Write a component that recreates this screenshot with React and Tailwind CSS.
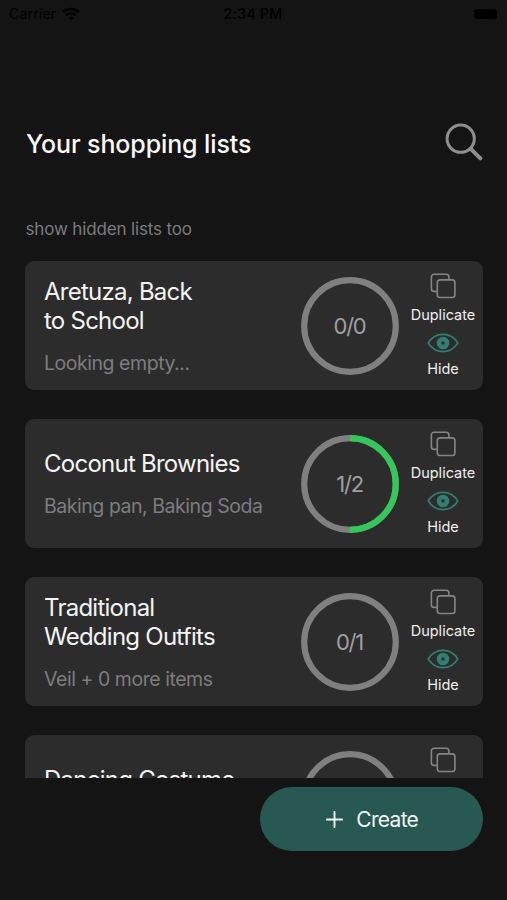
const lists = [
  { title: ["Aretuza, Back", "to School"], note: "Looking empty...", done: 0, total: 0 },
  { title: ["Coconut Brownies"], note: "Baking pan, Baking Soda", done: 1, total: 2 },
  { title: ["Traditional", "Wedding Outfits"], note: "Veil + 0 more items", done: 0, total: 1 },
  { title: ["Dancing Costume"], done: 0, total: 2 },
];

function WifiIcon() {
  return (
    <svg className="ml-[6px] h-[14px] w-[18px]" viewBox="0 0 18 14" fill="none" stroke="#000" strokeWidth="2.4">
      <path d="M1 5.2a11.5 11.5 0 0 1 16 0" />
      <path d="M4 8.4a7.2 7.2 0 0 1 10 0" />
      <path d="M9 13.6 6.2 10.8a4 4 0 0 1 5.6 0Z" fill="#000" stroke="none" />
    </svg>
  );
}

function SearchIcon() {
  return (
    <svg className="mb-[5px] h-[38px] w-[38px]" viewBox="0 0 38 38" fill="none" stroke="#8e8e91">
      <circle cx="15.7" cy="15.7" r="13.6" strokeWidth="3" />
      <path d="M25.8 25.8 35.3 35.3" strokeWidth="4" strokeLinecap="round" />
    </svg>
  );
}

function DuplicateIcon() {
  return (
    <svg className="h-[26px] w-[26px]" viewBox="0 0 26 26" fill="none" stroke="#858585" strokeWidth="1.6">
      <path d="M6.800 18.4H4.100a2.7 2.7 0 0 1-2.7-2.7V3.9A2.7 2.7 0 0 1 4.100 1.200h12.100a2.7 2.7 0 0 1 2.7 2.7v2.5" />
      <rect x="7.3" y="6.9" width="17.6" height="17.6" rx="2.7" />
    </svg>
  );
}

function EyeIcon() {
  return (
    <svg className="h-[20px] w-[32px]" viewBox="0 0 32 20" fill="none" stroke="#327e70" strokeWidth="1.6">
      <path d="M1.2 10C4.5 4.6 9.8 1.4 16 1.4S27.5 4.6 30.8 10C27.5 15.4 22.2 18.6 16 18.6S4.5 15.4 1.2 10Z" />
      <circle cx="16" cy="10" r="4" strokeWidth="4.6" />
    </svg>
  );
}

function Progress({ done, total }) {
  const length = 2 * Math.PI * 45.8;
  const share = total ? done / total : 0;
  return (
    <div className="grid h-[98px] w-[98px] shrink-0 place-items-center">
      <svg className="col-start-1 row-start-1 h-[98px] w-[98px] -rotate-90" viewBox="0 0 98 98" fill="none" strokeWidth="6.2">
        <circle cx="49" cy="49" r="45.8" stroke="#808080" />
        {share > 0 && (
          <circle cx="49" cy="49" r="45.8" stroke="#34c759" strokeDasharray={`${length * share} ${length}`} />
        )}
      </svg>
      <span className="col-start-1 row-start-1 text-[22px] leading-none tracking-[-1.2px] text-[#a0a0a0]">
        {done}/{total}
      </span>
    </div>
  );
}

function ListCard({ title, note, done, total }) {
  return (
    <article className="flex h-[128.5px] shrink-0 items-center rounded-[9px] bg-[#2c2c2c] pl-[19px]">
      <div className="min-w-0 flex-1 whitespace-nowrap">
        <h2 className="text-[24px] leading-[29.5px] tracking-[-0.75px] text-[#f5f5f5]">
          {title.map((line) => (
            <span key={line} className="block">{line}</span>
          ))}
        </h2>
        {note ? (
          <p className="mt-[15px] h-[24px] text-[19.5px] leading-[24px] tracking-[-0.46px] text-[#7d7d7f]">{note}</p>
        ) : (
          <div className="h-[39px]" />
        )}
      </div>
      <Progress done={done} total={total} />
      <div className="ml-[5px] flex h-full w-[79px] shrink-0 flex-col items-center pt-[11.5px] text-[14.5px] leading-[20px] text-[#f0f0f0]">
        <DuplicateIcon />
        <span className="mt-[6.5px]">Duplicate</span>
        <span className="mt-[8px]"><EyeIcon /></span>
        <span className="mt-[6px]">Hide</span>
      </div>
    </article>
  );
}

export default function App() {
  return (
    <div className="flex h-[900px] w-[507px] flex-col overflow-hidden bg-[#141414] font-['Inter','Liberation_Sans',sans-serif]">
      <header className="grid h-[27px] shrink-0 grid-cols-3 items-center pr-[10px] pl-[9px] text-[14px] text-black">
        <div className="flex items-center">
          <span className="tracking-[0.2px]">Carrier</span>
          <WifiIcon />
        </div>
        <span className="text-center font-semibold tracking-[0.3px]">2:34 PM</span>
        <span className="h-[10px] w-[23px] justify-self-end rounded-[3px] bg-black" />
      </header>
      <div className="mt-[95px] flex h-[44px] shrink-0 items-center justify-between pr-[24px] pl-[26px]">
        <h1 className="mt-[2px] text-[25px] font-medium tracking-[-0.12px] text-[#fafafa]">Your shopping lists</h1>
        <SearchIcon />
      </div>
      <p className="mt-[51px] shrink-0 pl-[25.5px] text-[17px] leading-[24px] tracking-[-0.15px] text-[#7c7c7e]">show hidden lists too</p>
      <main className="mt-[20.4px] flex h-[516.3px] shrink-0 flex-col gap-[29.5px] overflow-hidden pr-[24.5px] pl-[25px]">
        {lists.map((list) => (
          <ListCard key={list.title[0]} {...list} />
        ))}
      </main>
      <footer className="flex shrink-0 justify-end pt-[9.3px] pr-[24.5px]">
        <button className="flex h-[64px] w-[222.5px] items-center justify-center gap-[13px] rounded-full bg-[#275852] pt-[2px] pl-[2px] text-[21px] tracking-[-0.7px] text-[#f2f7f6]">
          <svg className="h-[17px] w-[17px]" viewBox="0 0 17 17" stroke="#f2f7f6" strokeWidth="1.9" strokeLinecap="round">
            <path d="M8.5 .9v15.200M.9 8.500h15.200" />
          </svg>
          Create
        </button>
      </footer>
    </div>
  );
}
